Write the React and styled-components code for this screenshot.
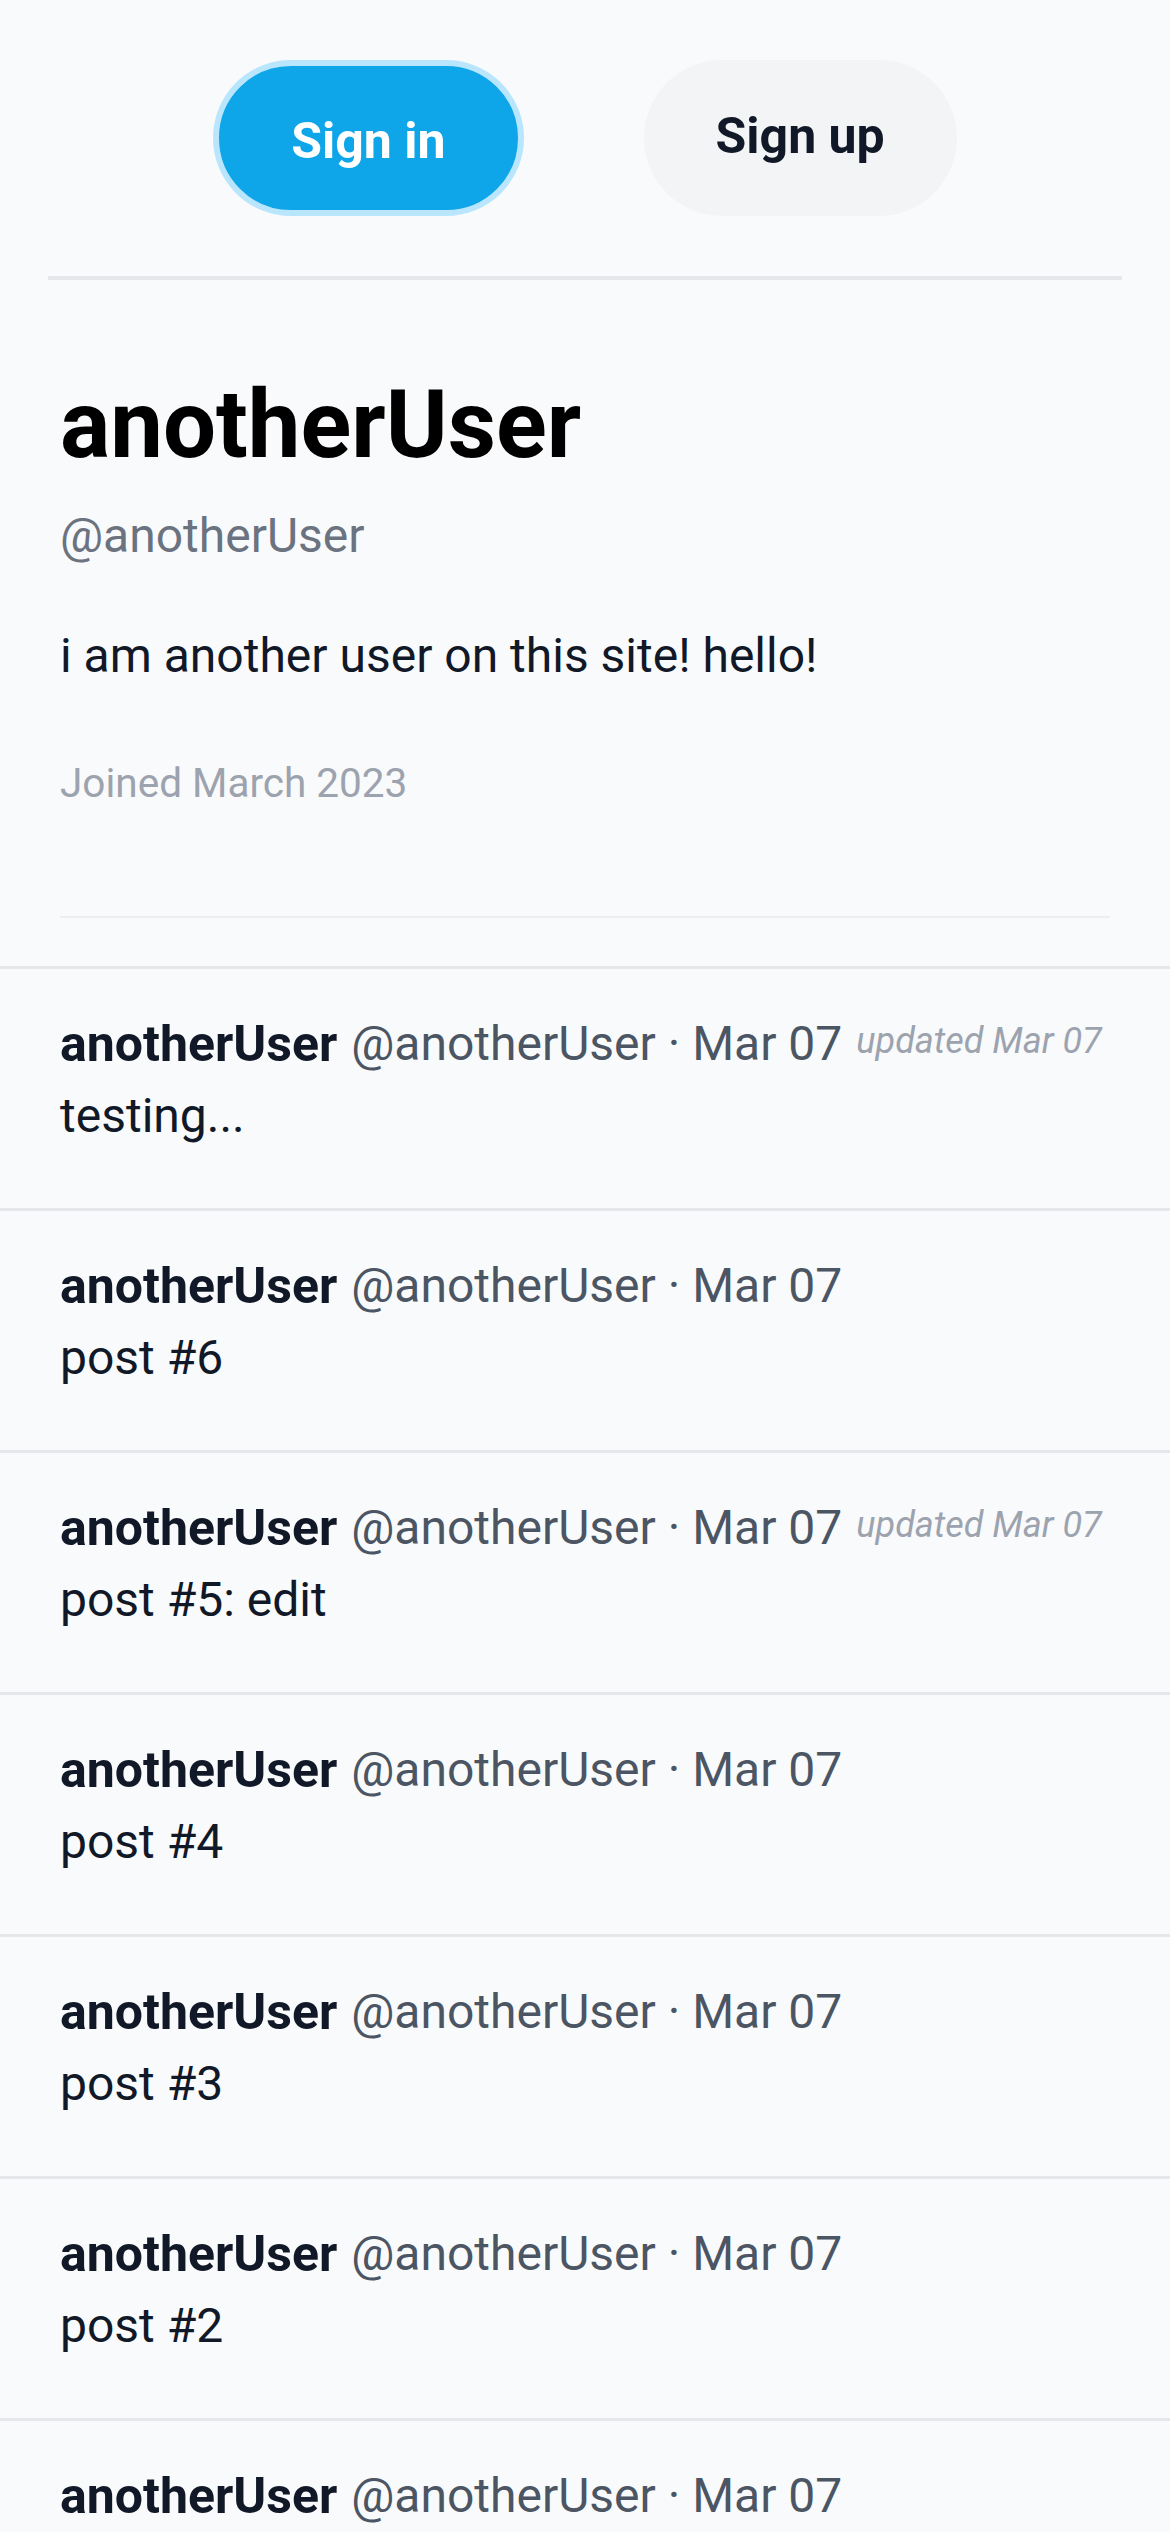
import styled, { createGlobalStyle } from "styled-components";

const GlobalStyle = createGlobalStyle`
  body {
    margin: 0;
    background: #f9fafb;
    font-family: Roboto, "Noto Sans", sans-serif;
    color: #111827;
  }
`;

const Page = styled.div`
  min-height: 100vh;
  background: #f9fafb;
`;

const Nav = styled.nav`
  display: flex;
  justify-content: center;
  gap: 120px;
  margin: 0 48px;
  padding: 60px 0;
  border-bottom: 4px solid #e5e7eb;
`;

const AuthButton = styled.button`
  box-sizing: border-box;
  height: 156px;
  display: flex;
  align-items: center;
  justify-content: center;
  padding: ${(p) => (p.$primary ? "6px 72px 0" : "0 72px 4px")};
  border: ${(p) => (p.$primary ? "6px solid #bae6fd" : "none")};
  border-radius: 9999px;
  background: ${(p) => (p.$primary ? "#0ea5e9" : "#f3f4f6")};
  color: ${(p) => (p.$primary ? "#ffffff" : "#111827")};
  font-family: inherit;
  font-size: 50px;
  font-weight: 700;
  cursor: pointer;
`;

const Profile = styled.section`
  border-bottom: 3px solid #e5e7eb;
`;

const ProfileInner = styled.div`
  padding: 91px 60px 48px;
`;

const DisplayName = styled.h1`
  margin: 0;
  font-size: 94px;
  line-height: 108px;
  font-weight: 700;
  color: #000000;
`;

const Handle = styled.div`
  margin-top: 21px;
  font-size: 48px;
  line-height: 72px;
  color: #6b7280;
`;

const Bio = styled.p`
  margin: 48px 0 0;
  font-size: 48px;
  line-height: 72px;
  color: #111827;
`;

const Joined = styled.div`
  margin-top: 61px;
  font-size: 40.5px;
  line-height: 60px;
  color: #9ca3af;
`;

const SoftRule = styled.hr`
  margin: 103px 0 0;
  border: none;
  height: 2px;
  background: #eceef1;
`;

const Post = styled.article`
  padding: 39px 60px 56px;
  border-bottom: 3px solid #e5e7eb;
`;

const PostHeader = styled.div`
  display: flex;
  align-items: center;
  gap: 14px;
  white-space: nowrap;
`;

const AuthorName = styled.span`
  font-size: 50px;
  line-height: 72px;
  font-weight: 700;
  color: #111827;
`;

const Meta = styled.span`
  font-size: 48px;
  line-height: 72px;
  color: #4b5563;
`;

const Updated = styled.span`
  font-size: 36px;
  line-height: 48px;
  font-style: italic;
  color: #9ca3af;
  margin-bottom: 6px;
`;

const PostBody = styled.div`
  font-size: 48px;
  line-height: 72px;
  color: #111827;
`;

const posts = [
  { id: 7, text: "testing...", updated: true },
  { id: 6, text: "post #6" },
  { id: 5, text: "post #5: edit", updated: true },
  { id: 4, text: "post #4" },
  { id: 3, text: "post #3" },
  { id: 2, text: "post #2" },
  { id: 1, text: "post #1" },
];

export default function App() {
  return (
    <Page>
      <GlobalStyle />
      <Nav>
        <AuthButton $primary>Sign in</AuthButton>
        <AuthButton>Sign up</AuthButton>
      </Nav>

      <Profile>
        <ProfileInner>
          <DisplayName>anotherUser</DisplayName>
          <Handle>@anotherUser</Handle>
          <Bio>i am another user on this site! hello!</Bio>
          <Joined>Joined March 2023</Joined>
          <SoftRule />
        </ProfileInner>
      </Profile>

      {posts.map((post) => (
        <Post key={post.id}>
          <PostHeader>
            <AuthorName>anotherUser</AuthorName>
            <Meta>@anotherUser · Mar 07</Meta>
            {post.updated && <Updated>updated Mar 07</Updated>}
          </PostHeader>
          <PostBody>{post.text}</PostBody>
        </Post>
      ))}
    </Page>
  );
}
